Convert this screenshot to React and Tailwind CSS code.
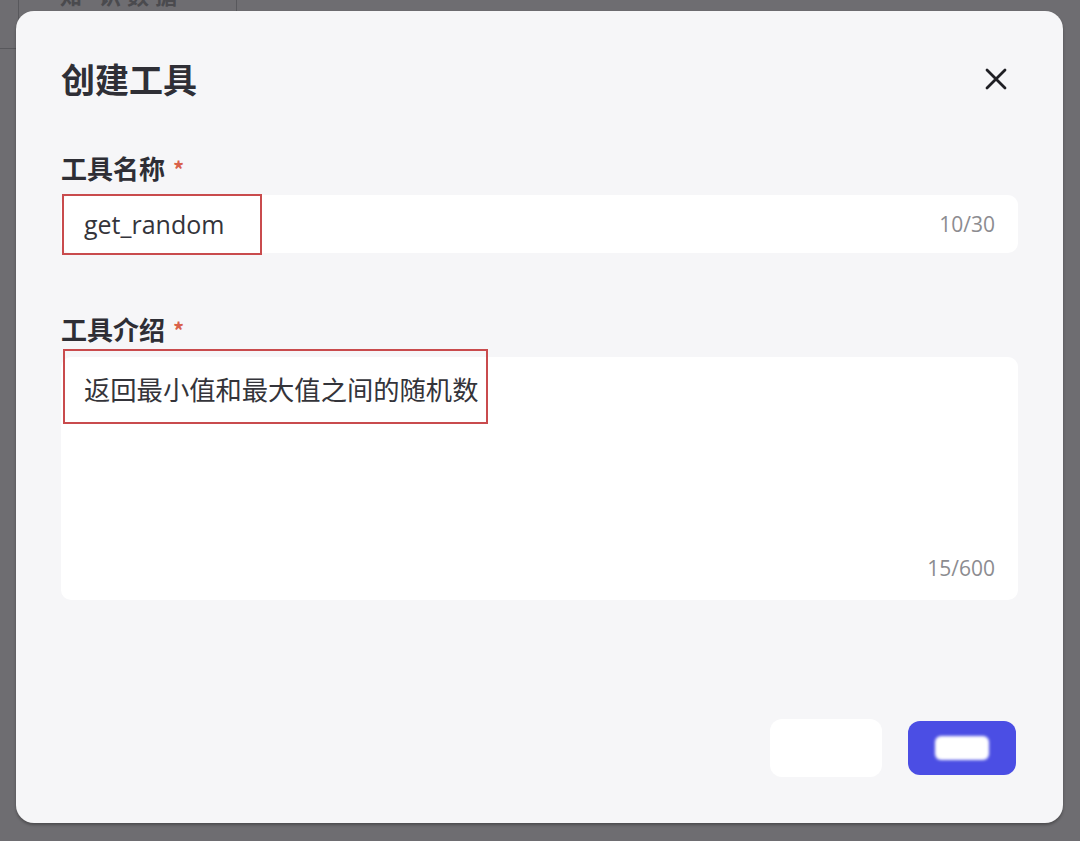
import { useState } from 'react';

const cjk = '"Noto Sans CJK SC", "Open Sans", sans-serif';

function Field({ label, children }) {
  return (
    <div className="flex flex-col">
      <div className="h-[34px] flex items-center text-[26px] font-bold text-[#2e2e35] leading-none">
        {label}
        <span className="ml-[8px] text-[22px] text-[#d9614a] font-bold">*</span>
      </div>
      {children}
    </div>
  );
}

export default function App() {
  const [name] = useState('get_random');
  const [desc] = useState('返回最小值和最大值之间的随机数');

  return (
    <div
      className="relative w-[1080px] h-[841px] overflow-hidden bg-[#6e6d71] pt-[11px] pl-[16px]"
      style={{ fontFamily: cjk }}
    >
      {/* page behind the overlay */}
      <div className="absolute left-[18px] top-[-30px] w-[219px] h-[78px] border-l border-r border-[#58585c]" />
      <div className="absolute left-0 top-[48px] w-[18px] border-t border-[#58585c]" />
      <div className="absolute left-[60px] top-[-22px] text-[22px] font-bold text-[#4a4a4e] tracking-[6px]">知 识数据</div>

      <div className="relative w-[1047px] h-[812px] rounded-[18px] bg-[#f6f6f8] shadow-[0_2px_3px_rgba(0,0,0,0.3)] pt-[48px] pl-[45px] pr-[45px] flex flex-col">
        <div className="h-[40px] flex items-center justify-between">
          <h1 className="text-[34px] font-bold text-[#2f2f36] leading-none">创建工具</h1>
          <button className="mr-[10px] w-[24px] h-[24px] flex items-center justify-center text-[#1f1f24]">
            <svg width="24" height="24" viewBox="0 0 24 24" fill="none" stroke="currentColor" strokeWidth="2.8" strokeLinecap="round">
              <path d="M3 3L21 21M21 3L3 21" />
            </svg>
          </button>
        </div>

        <div className="mt-[52px]">
          <Field label="工具名称">
            <div className="relative mt-[10px] h-[58px] rounded-[10px] bg-white flex items-center justify-between pl-[23px] pr-[23px]">
              <span className="text-[25px] text-[#34343a] pt-[2px]" style={{ fontFamily: '"Open Sans", "Noto Sans CJK SC", sans-serif' }}>{name}</span>
              <span className="text-[21px] text-[#8c8c90] pt-[2px]" style={{ fontFamily: '"Open Sans", sans-serif' }}>10/30</span>
              <div className="absolute left-[1px] top-[-1px] w-[200px] h-[61px] border-[2.5px] border-[#c94b4d]" />
            </div>
          </Field>
        </div>

        <div className="mt-[59px]">
          <Field label="工具介绍">
            <div className="relative mt-[11px] h-[243px] rounded-[10px] bg-white flex flex-col justify-between pl-[23px] pr-[23px] pt-[14px] pb-[18px]">
              <div className="h-[36px] flex items-center text-[26.3px] text-[#34343a] leading-none">{desc}</div>
              <div className="self-end h-[26px] flex items-center text-[21px] text-[#8c8c90]" style={{ fontFamily: '"Open Sans", sans-serif' }}>15/600</div>
              <div className="absolute left-[2px] top-[-8px] w-[425px] h-[75px] border-[2.5px] border-[#c94b4d]" />
            </div>
          </Field>
        </div>

        <div className="mt-[119px] mr-[2px] flex items-center justify-end gap-[26px]">
          <button className="w-[112px] h-[58px] rounded-[12px] bg-white text-transparent text-[20px]">取消</button>
          <button className="w-[108px] h-[54px] rounded-[12px] bg-[#4b4ee4] flex items-center justify-center">
            <span className="w-[54px] h-[24px] rounded-[6px] bg-white blur-[1.5px]" />
          </button>
        </div>
      </div>
    </div>
  );
}
